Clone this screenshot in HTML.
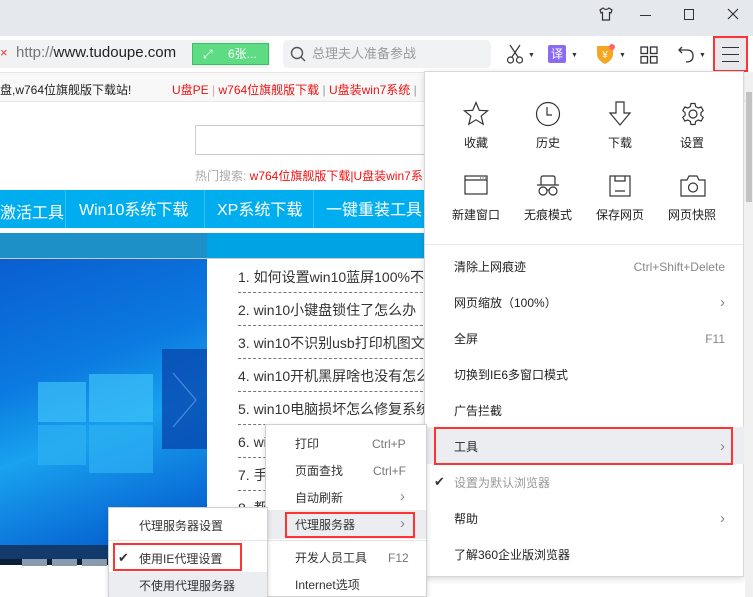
<!DOCTYPE html>
<html><head><meta charset="utf-8"><style>
*{margin:0;padding:0;box-sizing:border-box}
body{width:753px;height:597px;overflow:hidden;position:relative;background:#fff;font-family:"Liberation Sans","Noto Sans CJK SC",sans-serif;font-size:12px;color:#333}
.a{position:absolute}
.t{position:absolute;white-space:nowrap;line-height:16px}
.li{position:absolute;left:238px;width:190px;height:33px;border-bottom:1px dashed #777;font-size:14px;color:#333;white-space:nowrap;overflow:hidden;line-height:34px}
.mi{position:absolute;left:454px;font-size:12px;color:#222;white-space:nowrap;line-height:16px}
.sc{position:absolute;right:28px;font-size:12px;color:#888;line-height:16px}
.ar{position:absolute;right:28px;font-size:15px;color:#888;line-height:16px}
.gl{position:absolute;font-size:12px;color:#222;width:72px;text-align:center}
svg{position:absolute}
</style></head><body>
<div class="a" style="left:0;top:0;width:753px;height:36px;background:#e5e8ec"></div>
<svg style="left:598px;top:6px" width="16" height="16" viewBox="0 0 16 16" fill="none" stroke="#333" stroke-width="1.2"><path d="M5 2 L2 4 L3 7 L4.5 6.5 V14 H11.5 V6.5 L13 7 L14 4 L11 2 Q8 5 5 2Z"/></svg>
<div class="a" style="left:640px;top:15px;width:11px;height:1px;background:#333"></div>
<div class="a" style="left:684px;top:9px;width:10px;height:11px;border:1.2px solid #333"></div>
<svg style="left:727px;top:8px" width="12" height="12" viewBox="0 0 12 12" stroke="#333" stroke-width="1.2"><path d="M1 1L11 11M11 1L1 11"/></svg>
<div class="a" style="left:0;top:36px;width:753px;height:36px;background:#fff"></div>
<div class="a" style="left:0;top:40px;width:270px;height:28px;background:#f1f2f4;border-radius:0 5px 5px 0"></div>
<div class="t" style="left:0;top:45px;color:#e33;font-size:13px">×</div>
<div class="t" style="left:16px;top:45px;font-size:15px;color:#222"><span style="color:#777">http://</span>www.tudoupe.com</div>
<div class="a" style="left:192px;top:43px;width:77px;height:22px;background:#5ddc84;border:1px solid #3cbe65"></div>
<div class="t" style="left:203px;top:46px;color:#fff;font-size:12px">⤢</div>
<div class="t" style="left:228px;top:46px;color:#fff;font-size:12px">6张...</div>
<div class="a" style="left:283px;top:40px;width:208px;height:28px;background:#f1f2f4;border-radius:5px"></div>
<svg style="left:290px;top:46px" width="16" height="16" viewBox="0 0 16 16" fill="none" stroke="#555" stroke-width="1.4"><circle cx="7" cy="7" r="5.5"/><path d="M11 11L15 15"/></svg>
<div class="t" style="left:312px;top:46px;color:#999;font-size:13px">总理夫人准备参战</div>
<svg style="left:506px;top:44px" width="18" height="20" viewBox="0 0 18 20" fill="none" stroke="#333" stroke-width="1.2"><path d="M4 1L12 13M14 1L6 13"/><circle cx="4.5" cy="16" r="3"/><circle cx="13.5" cy="16" r="3"/></svg>
<div class="t" style="left:528px;top:48px;font-size:7px;color:#333">▼</div>
<div class="a" style="left:548px;top:45px;width:18px;height:18px;background:#8b6cf0;border-radius:2px;color:#fff;font-size:12px;text-align:center;line-height:18px">译</div>
<div class="t" style="left:571px;top:48px;font-size:7px;color:#333">▼</div>
<svg style="left:595px;top:43px" width="20" height="22" viewBox="0 0 20 22"><path d="M2 3H18V11Q18 17 10 21Q2 17 2 11Z" fill="#f5a623"/><text x="10" y="15" font-size="10" fill="#fff" text-anchor="middle" font-family="Liberation Sans">¥</text><circle cx="17" cy="4" r="3" fill="#f66"/></svg>
<div class="t" style="left:619px;top:48px;font-size:7px;color:#333">▼</div>
<svg style="left:640px;top:46px" width="18" height="18" viewBox="0 0 18 18" fill="none" stroke="#333" stroke-width="1.3"><rect x="1" y="1" width="6.5" height="6.5"/><rect x="10.5" y="1" width="6.5" height="6.5"/><rect x="1" y="10.5" width="6.5" height="6.5"/><rect x="10.5" y="10.5" width="6.5" height="6.5"/></svg>
<svg style="left:677px;top:44px" width="18" height="20" viewBox="0 0 18 20" fill="none" stroke="#333" stroke-width="1.3"><path d="M2 6H10Q16 6 16 12Q16 18 9 18"/><path d="M5 3L2 6L5 9"/></svg>
<div class="t" style="left:699px;top:48px;font-size:7px;color:#333">▼</div>
<div class="a" style="left:713px;top:36px;width:35px;height:36px;border:2px solid #f33;background:#e8e9ec"></div>
<div class="a" style="left:722px;top:47px;width:17px;height:1px;background:#333"></div>
<div class="a" style="left:722px;top:54px;width:17px;height:1px;background:#333"></div>
<div class="a" style="left:722px;top:61px;width:17px;height:1px;background:#333"></div>
<div class="a" style="left:0;top:72px;width:753px;height:1px;background:#e5e5e5"></div>
<div class="a" style="left:0;top:73px;width:753px;height:29px;background:#f8f8f8;border-bottom:1px solid #e8e8e8"></div>
<div class="t" style="left:0;top:82px;font-size:12px;color:#222">盘,w764位旗舰版下载站!</div>
<div class="t" style="left:172px;top:82px;font-size:12px;color:#e11">U盘PE <span style="color:#f99">|</span> w764位旗舰版下载 <span style="color:#999">|</span> U盘装win7系统 <span style="color:#999">|</span></div>
<div class="a" style="left:195px;top:125px;width:240px;height:30px;border:1px solid #ccc"></div>
<div class="t" style="left:195px;top:168px;font-size:12px;color:#aaa">热门搜索: <span style="color:#e11">w764位旗舰版下载|U盘装win7系</span></div>
<div class="a" style="left:0;top:190px;width:424px;height:38px;background:#00aeef"></div>
<div class="t" style="left:0;top:201px;color:#fff;font-size:16px;font-family:'Noto Sans CJK SC',sans-serif;line-height:20px">激活工具</div>
<div class="a" style="left:65px;top:190px;width:1px;height:38px;background:#33c0f3"></div>
<div class="t" style="left:79px;top:201px;color:#fff;font-size:16px;line-height:20px">Win10系统下载</div>
<div class="a" style="left:204px;top:190px;width:1px;height:38px;background:#33c0f3"></div>
<div class="t" style="left:217px;top:201px;color:#fff;font-size:16px;line-height:20px">XP系统下载</div>
<div class="a" style="left:313px;top:190px;width:1px;height:38px;background:#33c0f3"></div>
<div class="t" style="left:326px;top:201px;color:#fff;font-size:16px;line-height:20px">一键重装工具</div>
<div class="a" style="left:0;top:233px;width:207px;height:25px;background:#1e90c8"></div>
<div class="a" style="left:207px;top:233px;width:217px;height:25px;background:#00a3e4"></div>
<div class="a" style="left:0;top:258px;width:424px;height:1px;background:#ccc"></div>
<div class="a" style="left:0;top:259px;width:207px;height:306px;background:linear-gradient(160deg,#0a5fd0 0%,#0b7ae0 35%,#19a2ef 55%,#0a6fd8 80%,#0648b8 100%)"></div>
<div class="a" style="left:38px;top:382px;width:48px;height:40px;background:#3dc0f8;opacity:.7"></div>
<div class="a" style="left:89px;top:374px;width:64px;height:48px;background:#3dc0f8;opacity:.7"></div>
<div class="a" style="left:38px;top:425px;width:48px;height:40px;background:#2eb0f2;opacity:.7"></div>
<div class="a" style="left:89px;top:425px;width:64px;height:48px;background:#2eb0f2;opacity:.7"></div>
<div class="a" style="left:162px;top:349px;width:45px;height:100px;background:#0848b0;opacity:.8"></div>
<svg style="left:170px;top:372px" width="30" height="56" viewBox="0 0 30 56" fill="none" stroke="#4a8ce0" stroke-width="1.2"><path d="M3 1L26 28L3 55"/></svg>
<div class="a" style="left:0;top:545px;width:207px;height:20px;background:#123a6a"></div>
<div class="a" style="left:0;top:559px;width:207px;height:6px;background:#0a1f3a"></div>
<div class="a" style="left:22px;top:559px;width:25px;height:7px;background:#8a9bb0"></div>
<div class="a" style="left:52px;top:559px;width:25px;height:7px;background:#8a9bb0"></div>
<div class="a" style="left:82px;top:559px;width:25px;height:7px;background:#8a9bb0"></div>
<div class="li" style="top:260px">1. 如何设置win10蓝屏100%不</div>
<div class="li" style="top:293px">2. win10小键盘锁住了怎么办</div>
<div class="li" style="top:326px">3. win10不识别usb打印机图文</div>
<div class="li" style="top:359px">4. win10开机黑屏啥也没有怎么</div>
<div class="li" style="top:392px">5. win10电脑损坏怎么修复系统</div>
<div class="li" style="top:425px">6. win10</div>
<div class="li" style="top:458px">7. 手</div>
<div class="li" style="top:491px">8. 都</div>
<div class="a" style="left:424px;top:102px;width:1px;height:495px;background:#ddd"></div>
<div class="a" style="left:424px;top:71px;width:320px;height:506px;background:#fff;border:1px solid #d8d8d8;box-shadow:0 2px 6px rgba(0,0,0,.15)"></div>
<div class="a" style="left:745px;top:72px;width:8px;height:525px;background:#f0f0f0"></div>
<div class="a" style="left:746px;top:92px;width:6px;height:110px;background:#c2c2c2"></div>
<svg style="left:463px;top:101px" width="26" height="26" viewBox="0 0 26 26" fill="none" stroke="#333" stroke-width="1.2"><path d="M13 1.5L16.3 9.3L24.5 9.8L18.2 15.1L20.2 23.2L13 18.8L5.8 23.2L7.8 15.1L1.5 9.8L9.7 9.3Z"/></svg>
<svg style="left:535px;top:101px" width="26" height="26" viewBox="0 0 26 26" fill="none" stroke="#333" stroke-width="1.2"><circle cx="13" cy="13" r="11.5"/><path d="M12 6V14H17"/></svg>
<svg style="left:608px;top:101px" width="24" height="26" viewBox="0 0 24 26" fill="none" stroke="#333" stroke-width="1.2"><path d="M8 1H16V12H22L12 24L2 12H8Z"/></svg>
<svg style="left:680px;top:101px" width="26" height="26" viewBox="0 0 26 26" fill="none" stroke="#333" stroke-width="1.2"><path d="M11 1.5H15L15.7 4.6L18.2 6L21.2 5L23.2 8.5L20.9 10.7V13.3L23.2 15.5L21.2 19L18.2 18L15.7 19.4L15 22.5H11L10.3 19.4L7.8 18L4.8 19L2.8 15.5L5.1 13.3V10.7L2.8 8.5L4.8 5L7.8 6L10.3 4.6Z" transform="translate(0,1)"/><circle cx="13" cy="13" r="4"/></svg>
<div class="gl" style="left:440px;top:134px">收藏</div>
<div class="gl" style="left:512px;top:134px">历史</div>
<div class="gl" style="left:584px;top:134px">下载</div>
<div class="gl" style="left:656px;top:134px">设置</div>
<svg style="left:464px;top:175px" width="24" height="20" viewBox="0 0 24 20" fill="none" stroke="#333" stroke-width="1.2"><rect x="1" y="1" width="22" height="18"/><path d="M1 5H23"/><path d="M16 3H17M18.5 3H19.5M21 3H22" stroke-width="1"/></svg>
<svg style="left:536px;top:175px" width="24" height="22" viewBox="0 0 24 22" fill="none" stroke="#333" stroke-width="1.2"><path d="M5 10V3Q5 1 7 1H17Q19 1 19 3V10"/><path d="M1 10H23"/><circle cx="7" cy="16" r="4"/><circle cx="17" cy="16" r="4"/><path d="M11 15H13"/></svg>
<svg style="left:609px;top:175px" width="22" height="22" viewBox="0 0 22 22" fill="none" stroke="#333" stroke-width="1.2"><rect x="1" y="1" width="20" height="20"/><path d="M6 1V6H16V1M6 16H16"/></svg>
<svg style="left:680px;top:175px" width="26" height="22" viewBox="0 0 26 22" fill="none" stroke="#333" stroke-width="1.2"><path d="M1 5H7L9 1H17L19 5H25V21H1Z"/><circle cx="13" cy="12.5" r="4.5"/></svg>
<div class="gl" style="left:440px;top:206px">新建窗口</div>
<div class="gl" style="left:512px;top:206px">无痕模式</div>
<div class="gl" style="left:584px;top:206px">保存网页</div>
<div class="gl" style="left:656px;top:206px">网页快照</div>
<div class="a" style="left:425px;top:244px;width:319px;height:1px;background:#e8e8e8"></div>
<div class="mi" style="top:259px">清除上网痕迹</div><div class="sc" style="top:259px">Ctrl+Shift+Delete</div>
<div class="mi" style="top:295px">网页缩放（100%）</div><div class="ar" style="top:295px">›</div>
<div class="mi" style="top:331px">全屏</div><div class="sc" style="top:331px">F11</div>
<div class="mi" style="top:367px">切换到IE6多窗口模式</div>
<div class="mi" style="top:403px">广告拦截</div>
<div class="a" style="left:425px;top:427px;width:319px;height:37px;background:#ecedf0"></div>
<div class="a" style="left:434px;top:427px;width:299px;height:38px;border:2px solid #f33"></div>
<div class="mi" style="top:439px">工具</div><div class="ar" style="top:439px">›</div>
<div class="t" style="left:434px;top:474px;font-size:13px;color:#333">✔</div>
<div class="mi" style="top:475px;color:#999">设置为默认浏览器</div>
<div class="mi" style="top:511px">帮助</div><div class="ar" style="top:511px">›</div>
<div class="mi" style="top:547px">了解360企业版浏览器</div>
<div class="a" style="left:265px;top:424px;width:162px;height:173px;background:#fff;border:1px solid #d0d0d0;box-shadow:0 2px 5px rgba(0,0,0,.15)"></div>
<div class="t" style="left:295px;top:436px">打印</div><div class="t" style="left:372px;top:436px;color:#777">Ctrl+P</div>
<div class="t" style="left:295px;top:463px">页面查找</div><div class="t" style="left:373px;top:463px;color:#777">Ctrl+F</div>
<div class="t" style="left:295px;top:490px">自动刷新</div><div class="t" style="left:400px;top:489px;color:#888;font-size:15px">›</div>
<div class="a" style="left:266px;top:510px;width:160px;height:29px;background:#ecedf0"></div>
<div class="a" style="left:285px;top:512px;width:130px;height:26px;border:2px solid #f33"></div>
<div class="t" style="left:295px;top:517px">代理服务器</div><div class="t" style="left:400px;top:516px;color:#888;font-size:15px">›</div>
<div class="a" style="left:266px;top:540px;width:160px;height:1px;background:#e5e5e5"></div>
<div class="t" style="left:295px;top:550px">开发人员工具</div><div class="t" style="left:388px;top:550px;color:#777">F12</div>
<div class="t" style="left:295px;top:577px">Internet选项</div>
<div class="a" style="left:108px;top:507px;width:160px;height:90px;background:#fff;border:1px solid #d0d0d0;box-shadow:0 2px 5px rgba(0,0,0,.15)"></div>
<div class="t" style="left:139px;top:518px">代理服务器设置</div>
<div class="a" style="left:109px;top:540px;width:158px;height:1px;background:#e5e5e5"></div>
<div class="a" style="left:113px;top:543px;width:129px;height:28px;border:2px solid #f33"></div>
<div class="t" style="left:118px;top:550px;font-size:13px">✔</div>
<div class="t" style="left:139px;top:551px">使用IE代理设置</div>
<div class="a" style="left:109px;top:572px;width:158px;height:25px;background:#ecedf0"></div>
<div class="t" style="left:139px;top:578px">不使用代理服务器</div>
</body></html>
